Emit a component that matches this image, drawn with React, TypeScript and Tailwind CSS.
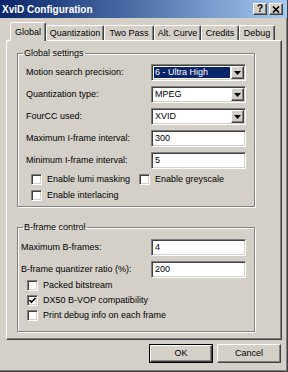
import React from "react";

// win2000 bevels
const sunken =
  "border border-t-[#808080] border-l-[#808080] border-r-white border-b-white shadow-[inset_1px_1px_0_#404040,inset_-1px_-1px_0_#d4d0c8]";
const raised =
  "border border-t-white border-l-white border-r-[#404040] border-b-[#404040] shadow-[inset_-1px_-1px_0_#808080]";
const etched =
  "border border-[#808080] shadow-[inset_1px_1px_0_white,1px_1px_0_white]";

function DropArrow() {
  return (
    <svg width="7" height="4" viewBox="0 0 7 4">
      <path d="M0 0 H7 L3.5 4 Z" fill="black" />
    </svg>
  );
}

function Combo({ value, highlight }: { value: string; highlight?: boolean }) {
  return (
    <div className={`${sunken} flex h-[17px] w-[95px] bg-white p-[1px]`}>
      <div className="flex flex-1 items-center pl-[1px] pr-[1px]">
        <span
          className={`flex h-[11px] flex-1 items-center pl-[1px] leading-[11px] ${
            highlight ? "bg-[#0a246a] text-white" : "text-black"
          }`}
        >
          {value}
        </span>
      </div>
      <div className={`${raised} flex w-[13px] items-center justify-center bg-[#d4d0c8]`}>
        <DropArrow />
      </div>
    </div>
  );
}

function Edit({ value }: { value: string }) {
  return (
    <div className={`${sunken} flex h-[17px] w-[95px] items-center bg-white pl-[3px]`}>
      {value}
    </div>
  );
}

function CheckBox({ checked }: { checked?: boolean }) {
  return (
    <div className={`${sunken} flex h-[11px] w-[11px] shrink-0 items-center justify-center bg-white`}>
      {checked && (
        <svg width="7" height="7" viewBox="0 0 7 7">
          <path d="M0.5 3 L2.5 5 L6.5 1" stroke="black" strokeWidth="1.6" fill="none" />
        </svg>
      )}
    </div>
  );
}

function Check({ label, checked }: { label: string; checked?: boolean }) {
  return (
    <div className="flex items-center gap-[5px]">
      <CheckBox checked={checked} />
      <span className="whitespace-nowrap">{label}</span>
    </div>
  );
}

function Row({ label, children }: { label: string; children: React.ReactNode }) {
  return (
    <div className="flex h-[17px] items-center justify-between">
      <span className="whitespace-nowrap">{label}</span>
      {children}
    </div>
  );
}

function Tab({ label, width, active }: { label: string; width: string; active?: boolean }) {
  return (
    <div
      className={`${width} flex items-center justify-center rounded-t-[2px] border-l border-t border-r border-l-white border-t-white border-r-[#404040] bg-[#d4d0c8] shadow-[inset_-1px_0_0_#808080] ${
        active ? "relative z-10 -mb-px h-[19px]" : "h-[15px]"
      }`}
    >
      {label}
    </div>
  );
}

function CaptionButton({ children }: { children: React.ReactNode }) {
  return (
    <div className={`${raised} flex h-[12px] w-[14px] items-center justify-center bg-[#d4d0c8] text-[10px] font-bold leading-none text-black`}>
      {children}
    </div>
  );
}

export default function App() {
  return (
    <div className="flex h-[372px] w-[288px] flex-col border-r border-b border-r-[#404040] border-b-[#404040] bg-[#d4d0c8] font-['Liberation_Sans',Arial,sans-serif] text-[9px] leading-[11px] text-black shadow-[inset_-1px_-1px_0_#808080]">
      {/* title bar */}
      <div className="flex h-[18px] shrink-0 items-center justify-between bg-gradient-to-r from-[#0a246a] to-[#a6caf0] pl-[2px] pr-[4px]">
        <span className="text-[10px] font-bold text-white">XviD Configuration</span>
        <div className="flex gap-[2px]">
          <CaptionButton>?</CaptionButton>
          <CaptionButton>
            <svg width="8" height="7" viewBox="0 0 8 7">
              <path d="M1 0.5 L7 6.5 M7 0.5 L1 6.5" stroke="black" strokeWidth="1.6" />
            </svg>
          </CaptionButton>
        </div>
      </div>

      {/* tabs */}
      <div className="flex h-[22px] shrink-0 items-end pl-[10px]">
        <Tab label="Global" width="w-[36px]" active />
        <Tab label="Quantization" width="w-[58px]" />
        <Tab label="Two Pass" width="w-[50px]" />
        <Tab label="Alt. Curve" width="w-[47px]" />
        <Tab label="Credits" width="w-[38px]" />
        <Tab label="Debug" width="w-[36px]" />
      </div>

      {/* tab page */}
      <div className={`${raised} ml-[6px] flex h-[300px] w-[276px] shrink-0 flex-col pl-[10px] pt-[7px]`}>
        <fieldset className={`${etched} w-[238px]`}>
          <legend className="ml-[5px] px-[1px] leading-[11px]">Global settings</legend>
          <div className="flex flex-col pl-[8px] pr-[8px] pt-[5px] pb-[4px]">
            <div className="flex flex-col gap-[5px]">
              <Row label="Motion search precision:">
                <Combo value="6 - Ultra High" highlight />
              </Row>
              <Row label="Quantization type:">
                <Combo value="MPEG" />
              </Row>
              <Row label="FourCC used:">
                <Combo value="XVID" />
              </Row>
              <Row label="Maximum I-frame interval:">
                <Edit value="300" />
              </Row>
              <Row label="Minimum I-frame interval:">
                <Edit value="5" />
              </Row>
            </div>
            <div className="mt-[4px] grid grid-cols-[108px_auto] gap-y-[3px] pl-[5px]">
              <div className="flex h-[13px]">
                <Check label="Enable lumi masking" />
              </div>
              <div className="flex h-[13px]">
                <Check label="Enable greyscale" />
              </div>
              <div className="flex h-[13px]">
                <Check label="Enable interlacing" />
              </div>
            </div>
          </div>
        </fieldset>

        <fieldset className={`${etched} mt-[15px] w-[238px]`}>
          <legend className="ml-[5px] px-[1px] leading-[11px]">B-frame control</legend>
          <div className="flex flex-col pl-[3px] pr-[8px] pt-[6px] pb-[8px]">
            <div className="flex flex-col gap-[5px]">
              <Row label="Maximum B-frames:">
                <Edit value="4" />
              </Row>
              <Row label="B-frame quantizer ratio (%):">
                <Edit value="200" />
              </Row>
            </div>
            <div className="flex flex-col pl-[6px]">
              <div className="flex h-[15px]">
                <Check label="Packed bitstream" />
              </div>
              <div className="flex h-[15px]">
                <Check label="DX50 B-VOP compatibility" checked />
              </div>
              <div className="flex h-[15px]">
                <Check label="Print debug info on each frame" />
              </div>
            </div>
          </div>
        </fieldset>
      </div>

      {/* buttons */}
      <div className="mt-[4px] flex justify-end gap-[4px] pr-[6px]">
        <div className="border border-black">
          <div className={`${raised} flex h-[17px] w-[62px] items-center justify-center`}>OK</div>
        </div>
        <div className={`${raised} flex h-[19px] w-[64px] items-center justify-center`}>Cancel</div>
      </div>
    </div>
  );
}
